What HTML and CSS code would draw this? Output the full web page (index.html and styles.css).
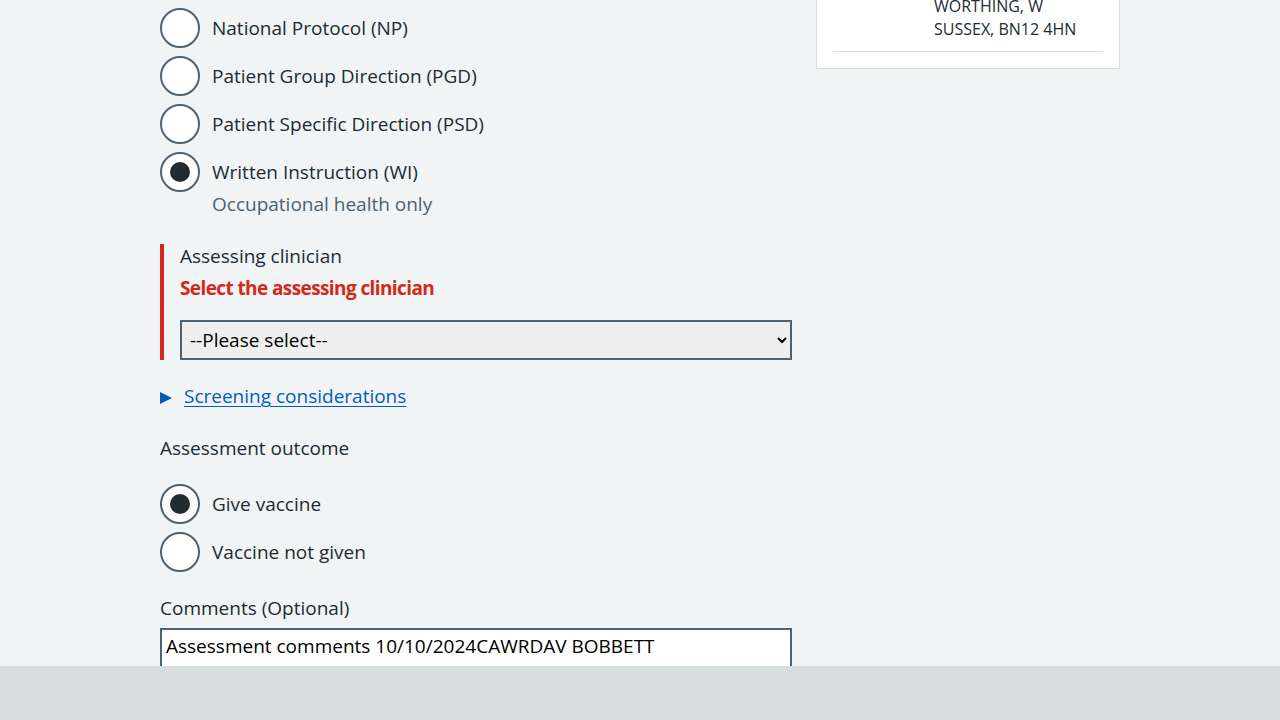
FILE: index.html
```html
<!DOCTYPE html>
<html lang="en">
<head>
<meta charset="utf-8">
<title>Assessment</title>
<link rel="stylesheet" href="styles.css">
</head>
<body>
<div class="page">
  <main class="main">
    <div class="radios">
      <div class="radio-item">
        <span class="radio-circle"></span>
        <span class="radio-label">National Protocol (NP)</span>
      </div>
      <div class="radio-item">
        <span class="radio-circle"></span>
        <span class="radio-label">Patient Group Direction (PGD)</span>
      </div>
      <div class="radio-item">
        <span class="radio-circle"></span>
        <span class="radio-label">Patient Specific Direction (PSD)</span>
      </div>
      <div class="radio-item radio-item--hinted">
        <span class="radio-circle radio-circle--checked"></span>
        <div class="radio-text">
          <span class="radio-label">Written Instruction (WI)</span>
          <span class="hint">Occupational health only</span>
        </div>
      </div>
    </div>

    <div class="conditional">
      <label class="field-label" for="clinician">Assessing clinician</label>
      <span class="error-message">Select the assessing clinician</span>
      <select class="select" id="clinician">
        <option>--Please select--</option>
      </select>
    </div>

    <div class="details">
      <span class="details-arrow"></span>
      <a class="details-link" href="#">Screening considerations</a>
    </div>

    <div class="legend">Assessment outcome</div>

    <div class="radios radios--outcome">
      <div class="radio-item">
        <span class="radio-circle radio-circle--checked"></span>
        <span class="radio-label">Give vaccine</span>
      </div>
      <div class="radio-item">
        <span class="radio-circle"></span>
        <span class="radio-label">Vaccine not given</span>
      </div>
    </div>

    <label class="field-label comments-label" for="comments">Comments (Optional)</label>
    <textarea class="textarea" id="comments" rows="5">Assessment comments 10/10/2024CAWRDAV BOBBETT</textarea>
  </main>

  <aside class="side">
    <div class="card">
      <div class="summary-row">
        <div class="summary-key"></div>
        <div class="summary-value">WORTHING, W<br>SUSSEX, BN12 4HN</div>
      </div>
    </div>
  </aside>
</div>
<div class="footer-bar"></div>
</body>
</html>
```

FILE: styles.css
```css
html, body {
  margin: 0;
  padding: 0;
}

body {
  background: #f0f4f5;
  color: #212b32;
  font-family: "Open Sans", "Liberation Sans", sans-serif;
  font-size: 19px;
  line-height: 28px;
  height: 720px;
  overflow: hidden;
}

.page {
  width: 960px;
  margin: 0 auto;
  display: grid;
  grid-template-columns: 632px 304px;
  column-gap: 24px;
  align-items: start;
}

.main {
  display: flex;
  flex-direction: column;
  padding-top: 8px;
}

.radios {
  display: flex;
  flex-direction: column;
  gap: 8px;
}

.radio-item {
  display: flex;
  align-items: center;
  gap: 12px;
  min-height: 40px;
}

.radio-item--hinted {
  align-items: flex-start;
}

.radio-circle {
  flex: none;
  width: 40px;
  height: 40px;
  box-sizing: border-box;
  border: 2px solid #4c6272;
  border-radius: 50%;
  background: #ffffff;
  display: flex;
  align-items: center;
  justify-content: center;
}

.radio-circle--checked::after {
  content: "";
  width: 20px;
  height: 20px;
  border-radius: 50%;
  background: #212b32;
}

.radio-text {
  display: flex;
  flex-direction: column;
  padding-top: 6px;
}

.radio-label {
  line-height: 28px;
}

.hint {
  color: #4c6272;
  line-height: 24px;
  margin-top: 6px;
}

.conditional {
  margin-top: 28px;
  border-left: 4px solid #d5281b;
  padding-left: 16px;
  display: flex;
  flex-direction: column;
}

.field-label {
  display: block;
  line-height: 24px;
}

.error-message {
  color: #d5281b;
  font-weight: 700;
  line-height: 24px;
  margin-top: 8px;
  letter-spacing: -0.6px;
}

.select {
  margin-top: 20px;
  height: 40px;
  width: 100%;
  box-sizing: border-box;
  border: 2px solid #4c6272;
  border-radius: 0;
  background: #efefef;
  color: #000000;
  font-family: inherit;
  font-size: 19px;
  padding: 0 4px;
}

.details {
  margin-top: 24px;
  display: flex;
  align-items: center;
  gap: 12px;
  line-height: 24px;
}

.details-arrow {
  width: 0;
  height: 0;
  border-top: 6.5px solid transparent;
  border-bottom: 6.5px solid transparent;
  border-left: 12px solid #005eb8;
  margin-top: 3px;
}

.details-link {
  color: #005eb8;
  text-decoration: underline;
  text-underline-offset: 3px;
  text-decoration-thickness: 1px;
}

.legend {
  margin-top: 28px;
  line-height: 24px;
}

.radios--outcome {
  margin-top: 24px;
}

.comments-label {
  margin-top: 24px;
}

.textarea {
  margin-top: 8px;
  width: 100%;
  box-sizing: border-box;
  border: 2px solid #4c6272;
  border-radius: 0;
  background: #ffffff;
  color: #000000;
  font-family: inherit;
  font-size: 19px;
  line-height: 24px;
  padding: 4px;
  resize: none;
  height: 140px;
}

.side {
  display: flex;
  flex-direction: column;
}

.card {
  margin-top: -9px;
  background: #ffffff;
  border: 1px solid #d8dde0;
  border-top: none;
  padding: 0 16px 16px;
}

.summary-row {
  display: grid;
  grid-template-columns: 85px 1fr;
  column-gap: 16px;
  font-size: 16px;
  line-height: 23px;
  padding-bottom: 10px;
  border-bottom: 1px solid #d8dde0;
}

.summary-value {
  padding-top: 4px;
}

.footer-bar {
  position: fixed;
  left: 0;
  right: 0;
  bottom: 0;
  height: 54px;
  background: #d8dde0;
}
```
